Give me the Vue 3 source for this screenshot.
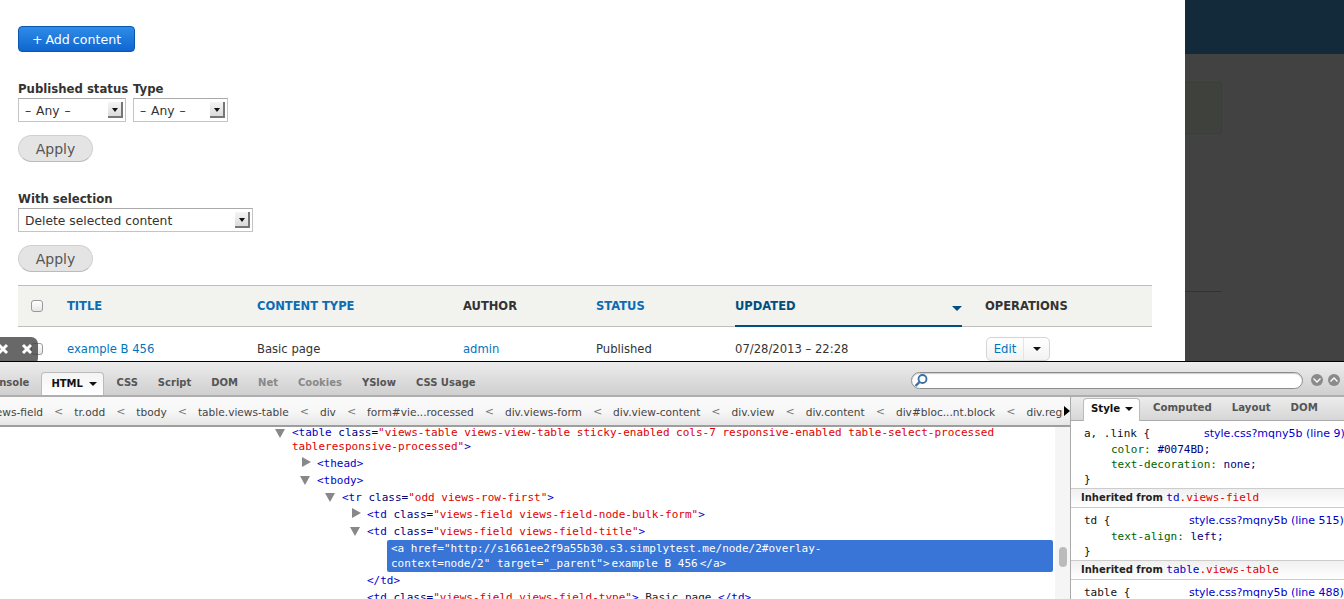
<script setup>
const tabs = [
  { t: 'Console', s: 'dark' },
  { t: 'HTML', active: true },
  { t: 'CSS', s: 'dark' },
  { t: 'Script', s: 'dark' },
  { t: 'DOM', s: 'dark' },
  { t: 'Net', s: 'mute' },
  { t: 'Cookies', s: 'mute' },
  { t: 'YSlow', s: 'dark' },
  { t: 'CSS Usage', s: 'dark' }
]
const crumbs = ['div.views-field', 'tr.odd', 'tbody', 'table.views-table', 'div', 'form#vie...rocessed', 'div.views-form', 'div.view-content', 'div.view', 'div.content', 'div#bloc...nt.block', 'div.region']
const B = 'b', N = 'n', R = 'r', K = 'k'
const lines = [
  { x: 21, tw: 'open', two: true, p: [[B, '<table'], [N, ' class='], [R, '"views-table views-view-table sticky-enabled cols-7 responsive-enabled table-select-processed tableresponsive-processed"'], [B, '>']] },
  { x: 46, tw: 'closed', p: [[B, '<thead>']] },
  { x: 46, tw: 'open', p: [[B, '<tbody>']] },
  { x: 71, tw: 'open', p: [[B, '<tr'], [N, ' class='], [R, '"odd views-row-first"'], [B, '>']] },
  { x: 96, tw: 'closed', p: [[B, '<td'], [N, ' class='], [R, '"views-field views-field-node-bulk-form"'], [B, '>']] },
  { x: 96, tw: 'open', p: [[B, '<td'], [N, ' class='], [R, '"views-field views-field-title"'], [B, '>']] },
  { sel: true },
  { x: 96, p: [[B, '</td>']] },
  { x: 96, p: [[B, '<td'], [N, ' class='], [R, '"views-field views-field-type"'], [B, '>'], [K, ' Basic page '], [B, '</td>']] }
]
</script>

<template>
  <div class="page">
    <div class="top">
      <main class="content">
        <a class="add">+ Add content</a>
        <div class="filters">
          <div class="filter f1">
            <label>Published status</label>
            <div class="select s1"><span>– Any –</span><i class="arrow"></i></div>
          </div>
          <div class="filter">
            <label>Type</label>
            <div class="select s2"><span>– Any –</span><i class="arrow"></i></div>
          </div>
        </div>
        <button class="apply">Apply</button>
        <div class="filter bulk">
          <label>With selection</label>
          <div class="select s3"><span>Delete selected content</span><i class="arrow"></i></div>
        </div>
        <button class="apply">Apply</button>
        <div class="thead">
          <span class="cell chk"><i class="check"></i></span>
          <a class="cell h">TITLE</a>
          <a class="cell h">CONTENT TYPE</a>
          <span class="cell hk">AUTHOR</span>
          <a class="cell h">STATUS</a>
          <span class="cell updated"><span>UPDATED</span><i class="sort"></i></span>
          <span class="cell hk">OPERATIONS</span>
        </div>
        <div class="trow">
          <span class="cell chk"><i class="check"></i></span>
          <a class="cell l">example B 456</a>
          <span class="cell">Basic page</span>
          <a class="cell l">admin</a>
          <span class="cell">Published</span>
          <span class="cell">07/28/2013 – 22:28</span>
          <span class="cell">
            <span class="edit"><a>Edit</a><span class="more"><i></i></span></span>
          </span>
        </div>
      </main>
      <aside class="dim">
        <div class="dim-bar"></div>
        <div class="dim-box"></div>
        <div class="dim-line"></div>
      </aside>
      <div class="badge">
        <svg width="12" height="12" viewBox="0 0 12 12"><path d="M2 2l8 8M10 2l-8 8" stroke="#fff" stroke-width="3" fill="none"/></svg>
        <svg width="12" height="12" viewBox="0 0 12 12"><path d="M2 2l8 8M10 2l-8 8" stroke="#fff" stroke-width="3" fill="none"/></svg>
      </div>
    </div>

    <div class="firebug">
      <div class="toolbar">
        <div class="tabs">
          <span v-for="tab in tabs" :key="tab.t" class="tab" :class="[tab.s, { active: tab.active }]">{{ tab.t }}<i v-if="tab.active" class="caret"></i></span>
        </div>
        <div class="search">
          <svg width="16" height="15" viewBox="0 0 16 15"><circle cx="9.5" cy="6" r="4" fill="#fff" stroke="#3a6ea5" stroke-width="1.8"/><path d="M6.5 9L2.5 13" stroke="#3a6ea5" stroke-width="2.4"/></svg>
        </div>
        <span class="round"><svg width="10" height="10" viewBox="0 0 10 10"><path d="M1.5 3.5L5 7l3.5-3.5" stroke="#fff" stroke-width="1.3" fill="none"/></svg></span>
        <span class="round"><svg width="10" height="10" viewBox="0 0 10 10"><path d="M1.5 6.5L5 3l3.5 3.5" stroke="#fff" stroke-width="1.3" fill="none"/></svg></span>
      </div>
      <div class="panels">
        <div class="left">
          <div class="crumbs">
            <div class="crumb-clip">
              <div class="crumb-track">
                <template v-for="(c, i) in crumbs" :key="c">
                  <span class="crumb">{{ c }}</span>
                  <span v-if="i < crumbs.length - 1" class="lt">&lt;</span>
                </template>
              </div>
            </div>
            <i class="crumb-next"></i>
          </div>
          <div class="code-wrap">
            <div class="code">
              <template v-for="(ln, i) in lines" :key="i">
                <div v-if="ln.sel" class="sel">
                  <div>&lt;a href="http://s1661ee2f9a55b30.s3.simplytest.me/node/2#overlay-</div>
                  <div>context=node/2" target="_parent"&gt;<span class="sel-txt">example B 456</span>&lt;/a&gt;</div>
                </div>
                <div v-else class="line" :class="{ two: ln.two }" :style="{ paddingLeft: ln.x + 'px' }">
                  <i v-if="ln.tw" class="tw" :class="ln.tw"></i>
                  <span class="txt"><span v-for="(p, j) in ln.p" :key="j" :class="p[0]">{{ p[1] }}</span></span>
                </div>
              </template>
            </div>
            <div class="scroll"><i></i></div>
          </div>
        </div>
        <div class="side">
          <div class="side-tabs">
            <span class="stab active">Style<i class="caret"></i></span>
            <span class="stab">Computed</span>
            <span class="stab">Layout</span>
            <span class="stab">DOM</span>
          </div>
          <div class="rule">
            <div class="rl"><span>a, .link {</span><a class="src s-a">style.css?mqny5b (line 9)</a></div>
            <div class="decl"><span class="pn">color:</span> <span class="pv">#0074BD;</span></div>
            <div class="decl"><span class="pn">text-decoration:</span> <span class="pv">none;</span></div>
            <div>}</div>
          </div>
          <div class="inh">Inherited from <span class="b">td</span><span class="r">.views-field</span></div>
          <div class="rule">
            <div class="rl"><span>td {</span><a class="src s-b">style.css?mqny5b (line 515)</a></div>
            <div class="decl"><span class="pn">text-align:</span> <span class="pv">left;</span></div>
            <div>}</div>
          </div>
          <div class="inh">Inherited from <span class="b">table</span><span class="r">.views-table</span></div>
          <div class="rule">
            <div class="rl"><span>table {</span><a class="src s-b">style.css?mqny5b (line 488)</a></div>
          </div>
        </div>
      </div>
    </div>
  </div>
</template>

<style>
html, body { margin: 0; background: #fff; overflow: hidden; }
</style>

<style scoped>
.page { width: 1344px; height: 599px; overflow: hidden; font-family: "DejaVu Sans", sans-serif; font-size: 12px; color: #222; display: flex; flex-direction: column; }
i { display: block; }
.top { height: 361px; flex: none; display: flex; position: relative; overflow: hidden; }
.content { width: 1167px; padding: 26px 0 0 18px; flex: none; display: flex; flex-direction: column; align-items: flex-start; }
.add { box-sizing: border-box; width: 117px; height: 26px; border-radius: 4px; border: 1px solid #0b57b0; background: linear-gradient(#2f8ce8, #0f66cf); color: #fff; font-size: 12.6px; word-spacing: -1px; line-height: 25px; text-align: center; }
.filters { display: flex; gap: 7px; margin-top: 29px; }
.f1 { width: 108px; }
.filter label { display: block; font-weight: 700; font-size: 11.7px; line-height: 17px; height: 17px; color: #333; white-space: nowrap; }
.select { box-sizing: border-box; height: 24px; border: 1px solid #c4c4c4; border-top-color: #aaa; background: #fff; display: flex; align-items: center; justify-content: space-between; padding: 0 2px 0 6px; font-size: 12.3px; color: #333; }
.select span { padding-top: 2px; word-spacing: 1px; }
.s1 { width: 108px; }
.s2 { width: 95px; }
.s3 { width: 235px; }
.s3 span { word-spacing: 0; }
.arrow { width: 15px; height: 16px; background: linear-gradient(#f4f4f4, #dcdcdc); border-right: 2px solid #777; border-bottom: 2px solid #777; box-sizing: border-box; position: relative; }
.arrow::after { content: ""; position: absolute; left: 4px; top: 6px; border: 3px solid transparent; border-top: 4px solid #111; border-bottom: 0; }
.apply { box-sizing: border-box; width: 75px; height: 27px; margin-top: 13px; padding: 1px 0 0; border-radius: 14px; border: 1px solid #d0d0d0; border-bottom-color: #bbb; background: #e4e4e4; color: #555; font-family: inherit; font-size: 14px; line-height: 24px; }
.bulk { margin-top: 29px; }
.thead, .trow { width: 1134px; display: grid; grid-template-columns: 49px 190px 206px 133px 139px 250px 167px; align-items: center; }
.thead { box-sizing: border-box; height: 42px; margin-top: 13px; background: #f2f2ee; border-top: 1px solid #bebfb9; border-bottom: 1px solid #bebfb9; font-weight: 700; font-size: 11.5px; }
.trow { box-sizing: border-box; height: 34px; padding-top: 9px; font-size: 11.6px; color: #333; }
.cell { white-space: nowrap; }
.chk { padding-left: 13px; }
.check { width: 10px; height: 10px; border: 1px solid #999; border-radius: 3px; background: linear-gradient(#fff, #e6e6e6); }
.h { color: #0a6db5; }
.hk { color: #333; }
.l { color: #0074bd; }
.updated { box-sizing: border-box; width: 227px; height: 41px; margin-bottom: -1px; border-bottom: 2px solid #004f80; color: #004f80; display: flex; justify-content: space-between; align-items: center; }
.sort { border: 5px solid transparent; border-top: 5px solid #004f80; border-bottom: 0; margin-top: 6px; }
.edit { box-sizing: border-box; display: flex; width: 64px; height: 24px; margin: 0 0 0 1px; border: 1px solid #d4d4d4; border-radius: 5px; background: linear-gradient(#fff, #f2f2f2); line-height: 22px; }
.edit a { color: #0074bd; width: 36px; text-align: center; border-right: 1px solid #e4e4e4; }
.more { flex: 1; display: flex; align-items: center; justify-content: center; }
.more i { border: 4px solid transparent; border-top: 4px solid #111; border-bottom: 0; }
.dim { flex: 1; background: #424242; }
.dim-bar { height: 54px; background: #132a3a; }
.dim-box { box-sizing: border-box; width: 37px; height: 52px; margin-top: 28px; border: 1px solid #3a3f36; border-left: 0; background: #3f413c; border-radius: 0 2px 2px 0; }
.dim-line { width: 37px; height: 1px; margin-top: 157px; background: #333; }
.badge { position: absolute; left: -3px; bottom: -4px; width: 41px; height: 28px; box-sizing: border-box; padding: 4px 0 0 0; background: rgba(66, 66, 66, .8); border-radius: 0 7px 7px 0; display: flex; gap: 12px; align-items: flex-start; }
.badge svg { margin-top: 2px; }

.firebug { flex: 1; min-height: 0; border-top: 1px solid #000; display: flex; flex-direction: column; background: #fff; }
.toolbar { height: 35px; flex: none; box-sizing: border-box; display: flex; align-items: flex-start; background: linear-gradient(#ececec, #cfcfcf); border-bottom: 2px solid #aeaeae; overflow: hidden; }
.tabs { width: 911px; flex: none; box-sizing: border-box; display: flex; align-items: flex-start; margin-left: -25px; margin-right: 25px; padding-top: 10px; font-weight: 700; font-size: 10px; }
.tab { height: 22px; line-height: 21px; padding: 0 10px; white-space: nowrap; box-sizing: border-box; }
.dark { color: #555; }
.mute { color: #888; }
.tab.active { border: 1px solid #bbb; border-bottom: 0; border-radius: 4px 4px 0 0; background: linear-gradient(#f4f4f4, #fff); color: #111; display: flex; align-items: center; gap: 6px; line-height: 19px; padding: 0 0 1px 9px; width: 63px; margin: 0 2px; height: 23px; }
.caret { border: 4px solid transparent; border-top: 4px solid #111; border-bottom: 0; }
.search { box-sizing: border-box; width: 392px; height: 17px; margin-top: 10px; border: 1px solid #8c8c8c; border-radius: 9px; background: #fff; box-shadow: inset 0 1px 1px #ccc; flex: none; display: flex; align-items: center; }
.search svg { margin-left: 1px; }
.round { width: 12px; height: 12px; border-radius: 50%; background: #8a8a8a; margin: 12px 0 0 8px; flex: none; display: flex; align-items: center; justify-content: center; }
.round + .round { margin-left: 5px; }
.panels { flex: 1; min-height: 0; display: flex; overflow: hidden; }
.left { width: 1070px; flex: none; display: flex; flex-direction: column; border-right: 1px solid #aaa; }
.crumbs { height: 30px; flex: none; box-sizing: border-box; position: relative; background: linear-gradient(#fafafa, #f7f7f7 50%, #e6e6e6); border-bottom: 2px solid #9e9e9e; overflow: hidden; }
.crumb-clip { width: 1063px; overflow: hidden; }
.crumb-track { display: flex; align-items: center; height: 28px; padding-top: 1px; box-sizing: border-box; margin-left: -32px; white-space: nowrap; font-size: 10.6px; color: #444; gap: 11px; }
.lt { color: #777; font-size: 11px; }
.crumb-next { position: absolute; right: 0; top: 9px; border: 5px solid transparent; border-left: 6px solid #000; border-right: 0; }
.code-wrap { flex: 1; min-height: 0; display: flex; overflow: hidden; }
.code { width: 1055px; flex: none; overflow: hidden; font-family: "DejaVu Sans Mono", monospace; font-size: 11px; margin-top: -2px; }
.line { position: relative; height: 17px; line-height: 17px; white-space: nowrap; box-sizing: border-box; margin-left: 271px; }
.two { height: 30px; padding-top: 1px; line-height: 14px; white-space: normal; }
.txt { display: block; }
.two .txt { width: 720px; }
.tw { position: absolute; margin-left: -15px; top: 2px; }
.tw.closed { border: 5px solid transparent; border-left: 9px solid #888; border-right: 0; }
.tw.open { border: 5px solid transparent; border-top: 9px solid #888; border-bottom: 0; margin-left: -17px; top: 4px; }
.b { color: #0000c8; }
.n { color: #00007a; }
.r { color: #e00000; }
.k { color: #222; }
.sel { box-sizing: border-box; margin-left: 387px; width: 666px; height: 32px; padding: 1px 0 0 4px; line-height: 15px; background: #3875d7; color: #fff; border-radius: 2px; white-space: nowrap; }
.sel-txt { margin: 0 2px; }
.scroll { flex: 1; background: #f5f5f5; position: relative; }
.scroll i { position: absolute; left: 4px; top: 120px; width: 8px; height: 20px; border-radius: 4px; background: #bbb; }
.side { flex: 1; min-width: 0; font-family: "DejaVu Sans Mono", monospace; font-size: 11px; color: #111; overflow: hidden; }
.side-tabs { box-sizing: border-box; height: 24px; display: flex; align-items: flex-start; background: linear-gradient(#ececec, #d6d6d6); border-bottom: 1px solid #aaa; padding-left: 12px; font-family: "DejaVu Sans", sans-serif; font-size: 10.2px; font-weight: 700; color: #555; }
.stab { line-height: 21px; margin-right: 20px; white-space: nowrap; }
.stab.active { box-sizing: border-box; width: 57px; height: 23px; margin: 1px 13px 0 0; border: 1px solid #bbb; border-bottom: 0; border-radius: 4px 4px 0 0; background: #fff; color: #111; display: flex; align-items: center; gap: 5px; padding: 0 0 3px 7px; }
.rule { padding: 5px 0 0 13px; line-height: 15px; }
.rl { display: flex; white-space: nowrap; position: relative; height: 16px; }
.src { position: absolute; color: #0000d0; font-family: "DejaVu Sans", sans-serif; }
.s-a { left: 120px; }
.s-b { left: 105px; }
.decl { padding-left: 27px; }
.pn { color: #006000; }
.pv { color: #00007a; }
.inh { box-sizing: border-box; height: 20px; line-height: 18px; padding-left: 10px; font-family: "DejaVu Sans", sans-serif; font-size: 10px; font-weight: 700; border-top: 1px solid #ccc; border-bottom: 1px solid #ccc; background: linear-gradient(#f0f0f0, #fff); color: #222; margin-top: 1px; white-space: nowrap; }
.inh span { font-family: "DejaVu Sans Mono", monospace; font-size: 11px; font-weight: 400; }
</style>
